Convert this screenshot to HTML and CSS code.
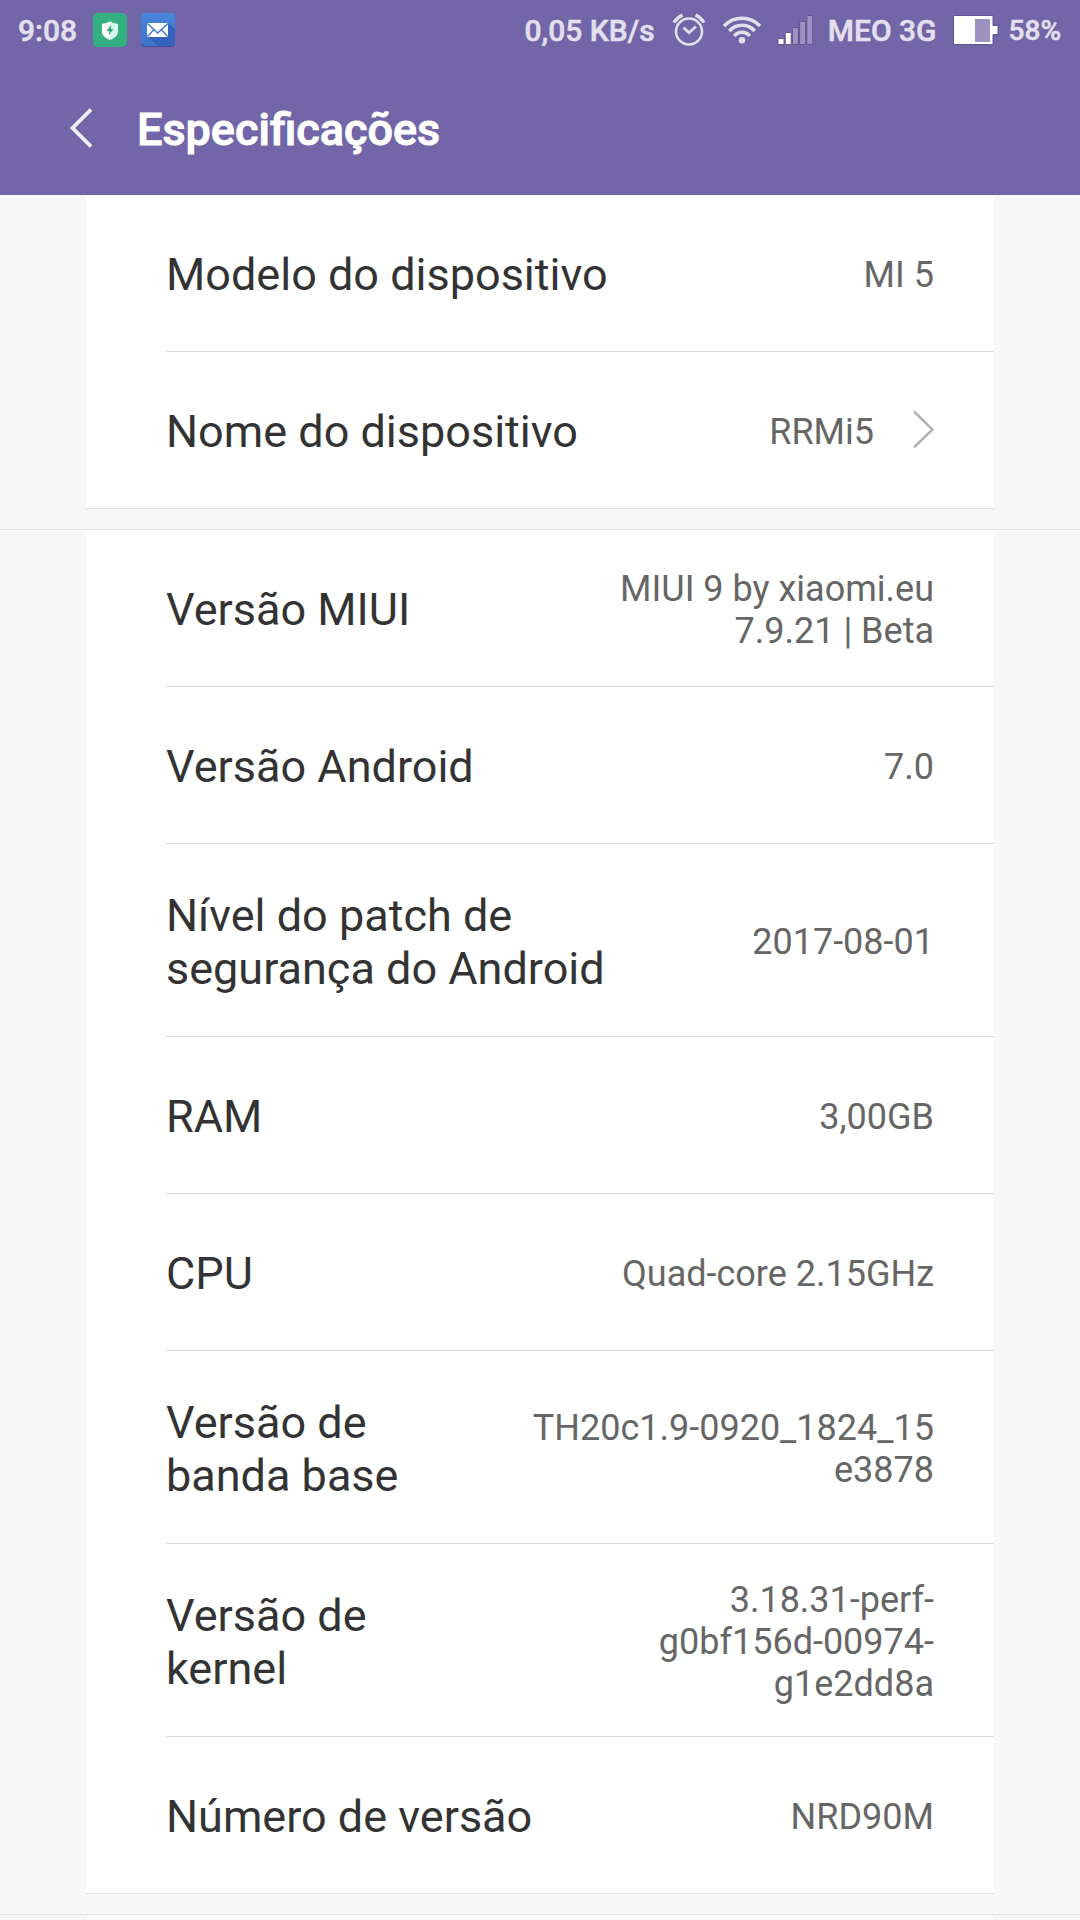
FILE: index.html
```html
<!DOCTYPE html>
<html lang="pt">
<head>
    <meta charset="UTF-8">
    <title>Especificações</title>
    <link rel="stylesheet" href="styles.css">
</head>
<body>

    <header class="header">
        <div class="status-bar">
            <span class="clock">9:08</span>
            <svg class="app-icon" width="34" height="34" viewBox="0 0 34 34">
                <rect width="34" height="34" rx="5" fill="#34b080"/>
                <path d="M17 8C14.500 10 12 10.500 9 10.800V19c0 3.500 3.500 6 8 8z" fill="#fff"/>
                <path d="M17 8c2.500 2 5 2.500 8 2.800V19c0 3.500-3.500 6-8 8z" fill="#d5fbed"/>
                <path d="M18.500 11.500L13.500 18h3l-1 4.500 5-6.500h-3z" fill="#2ca577"/>
            </svg>
            <svg class="app-icon mail-icon" width="34" height="34" viewBox="0 0 34 34">
                <defs>
                    <linearGradient id="mailBg" x1="0" y1="0" x2="0" y2="1">
                        <stop offset="0" stop-color="#4786db"/>
                        <stop offset="1" stop-color="#3b74c9"/>
                    </linearGradient>
                </defs>
                <rect y="1" width="34" height="33" rx="4" fill="#4a4a91"/>
                <rect width="34" height="33" rx="4" fill="url(#mailBg)"/>
                <path d="M27 10l7 6v13q0 4-4 4H17l-10-9z" fill="#3363bd"/>
                <rect x="6" y="10" width="21" height="14" fill="#fff"/>
                <path d="M6.500 10.500l10.200 9.500L27 10.500M6.500 23.500l6.500-7M26.700 23.500l-6.500-7" fill="none" stroke="#3b74c9" stroke-width="1.300"/>
            </svg>

            <span class="net-speed">0,05 KB/s</span>
            <svg class="alarm-icon" width="34" height="34" viewBox="0 0 34 34" fill="none" stroke="#e3e0ee">
                <circle cx="17" cy="18.500" r="13" stroke-width="2.600"/>
                <path d="M11.500 14.500l5.500 5.300 7-6.300" stroke-width="2.600"/>
                <path d="M2 9.500Q5 4.500 10.500 2M32 9.500Q29 4.500 23.500 2" stroke-width="3.400"/>
            </svg>
            <svg class="wifi-icon" width="40" height="30" viewBox="0 0 40 30" fill="none" stroke="#e3e0ee" stroke-width="3.600">
                <path d="M2 11Q9.500 3.200 20 3.200T38 11"/>
                <path d="M7.300 16Q12.500 10.200 20 10.200T32.700 16"/>
                <path d="M12.300 21Q15.300 17.200 20 17.200T27.700 21"/>
                <circle cx="20" cy="25.200" r="3.200" fill="#e3e0ee" stroke="none"/>
            </svg>
            <svg class="signal-icon" width="37" height="32" viewBox="0 0 37 32" stroke="#62568f" stroke-width="1">
                <rect x="1" y="24.500" width="6" height="6" rx="1" fill="#fff"/>
                <rect x="8.200" y="18.500" width="6" height="12" rx="1" fill="#fff"/>
                <rect x="15.400" y="13.500" width="6" height="17" rx="1" fill="#9c92c2"/>
                <rect x="22.600" y="7.500" width="6" height="23" rx="1" fill="#9c92c2"/>
                <rect x="29.800" y="1.500" width="6" height="29" rx="1" fill="#9c92c2"/>
            </svg>
            <span class="carrier">MEO 3G</span>
            <svg class="battery-icon" width="46" height="32" viewBox="0 0 46 32">
                <path d="M.5 1.500h39.500v10h5v9h-5v10H.5z" fill="#fff" stroke="#5f5490"/>
                <rect x="22" y="5" width="15" height="23" fill="#9c92c2"/>
            </svg>
            <span class="battery-level">58%</span>
        </div>

        <div class="title-bar">
            <svg class="back" width="26" height="42" viewBox="0 0 26 42">
                <path d="M23 2.500L4.500 21 23 39.500" fill="none" stroke="#f1f0f6" stroke-width="3.800"/>
            </svg>
            <h1>Especificações</h1>
        </div>
    </header>

    <main>
        <section class="card">
            <div class="row">
                <span class="label">Modelo do dispositivo</span>
                <span class="value">MI 5</span>
            </div>
            <div class="row">
                <span class="label">Nome do dispositivo</span>
                <span class="value">RRMi5</span>
                <svg class="arrow" width="22" height="40" viewBox="0 0 22 40">
                    <path d="M2 1.500L20.500 19.500 2 37.500" fill="none" stroke="#b3b3b3" stroke-width="2.600"/>
                </svg>
            </div>
        </section>

        <div class="separator"></div>

        <section class="card">
            <div class="row">
                <span class="label">Versão MIUI</span>
                <span class="value">MIUI 9 by xiaomi.eu<br>7.9.21 | Beta</span>
            </div>
            <div class="row">
                <span class="label">Versão Android</span>
                <span class="value">7.0</span>
            </div>
            <div class="row tall">
                <span class="label">Nível do patch de<br>segurança do Android</span>
                <span class="value">2017-08-01</span>
            </div>
            <div class="row">
                <span class="label">RAM</span>
                <span class="value">3,00GB</span>
            </div>
            <div class="row">
                <span class="label">CPU</span>
                <span class="value">Quad-core 2.15GHz</span>
            </div>
            <div class="row tall">
                <span class="label">Versão de<br>banda base</span>
                <span class="value">TH20c1.9-0920_1824_15<br>e3878</span>
            </div>
            <div class="row tall">
                <span class="label">Versão de<br>kernel</span>
                <span class="value">3.18.31-perf-<br>g0bf156d-00974-<br>g1e2dd8a</span>
            </div>
            <div class="row">
                <span class="label">Número de versão</span>
                <span class="value">NRD90M</span>
            </div>
        </section>

        <div class="separator"></div>

        <section class="card next"></section>
    </main>

</body>
</html>
```

FILE: styles.css
```css
* {
    box-sizing: border-box;
}

body {
    font-family: Roboto, sans-serif;
    margin: 0;
    height: 1920px;
    overflow: hidden;
    background-color: #f7f7f7;
}

svg {
    display: block;
    flex-shrink: 0;
}

.header {
    height: 195px;
    background-color: #7265a8;
    color: white;
}

.status-bar {
    display: flex;
    align-items: center;
    height: 60px;
    padding: 0 19px 0 18px;
    font-size: 30px;
    font-weight: 500;
    color: #e3e0ee;
    -webkit-text-stroke: 0.5px #e3e0ee;
    white-space: nowrap;
}

.clock {
    width: 75px;
}

.mail-icon {
    margin-left: 14px;
}

.net-speed {
    margin-left: auto;
}

.alarm-icon {
    margin-left: 17px;
}

.wifi-icon {
    margin-left: 16px;
}

.signal-icon {
    margin: 0 14px 0 15px;
}

.battery-icon {
    margin: 0 10px 0 16px;
}

.battery-level {
    font-size: 28px;
}

.title-bar {
    display: flex;
    align-items: center;
    height: 135px;
    padding: 0 0 0 68px;
}

.title-bar h1 {
    margin: 0 0 0 43px;
    padding-top: 3px;
    font-size: 45px;
    font-weight: 500;
    line-height: 53px;
    -webkit-text-stroke: 1px white;
}

.card {
    margin: 0 86px;
    background-color: white;
    border-bottom: 1px solid #e2e2e2;
}

.card.next {
    height: 5px;
    border-bottom: none;
}

.row {
    display: flex;
    align-items: center;
    height: 157px;
    margin-left: 80px;
    padding-right: 60px;
    border-bottom: 1px solid #d9d9d9;
}

.row.tall {
    height: 193px;
}

.row:last-child {
    height: 156px;
    border-bottom: none;
}

.label {
    padding-top: 3px;
    font-size: 45px;
    line-height: 53px;
    color: #333;
}

.value {
    margin-left: auto;
    padding-top: 4px;
    font-size: 36px;
    line-height: 42px;
    text-align: right;
    color: #666;
}

.arrow {
    margin-left: 38px;
}

.separator {
    height: 21px;
    border-bottom: 1px solid #e2e2e2;
}
```
